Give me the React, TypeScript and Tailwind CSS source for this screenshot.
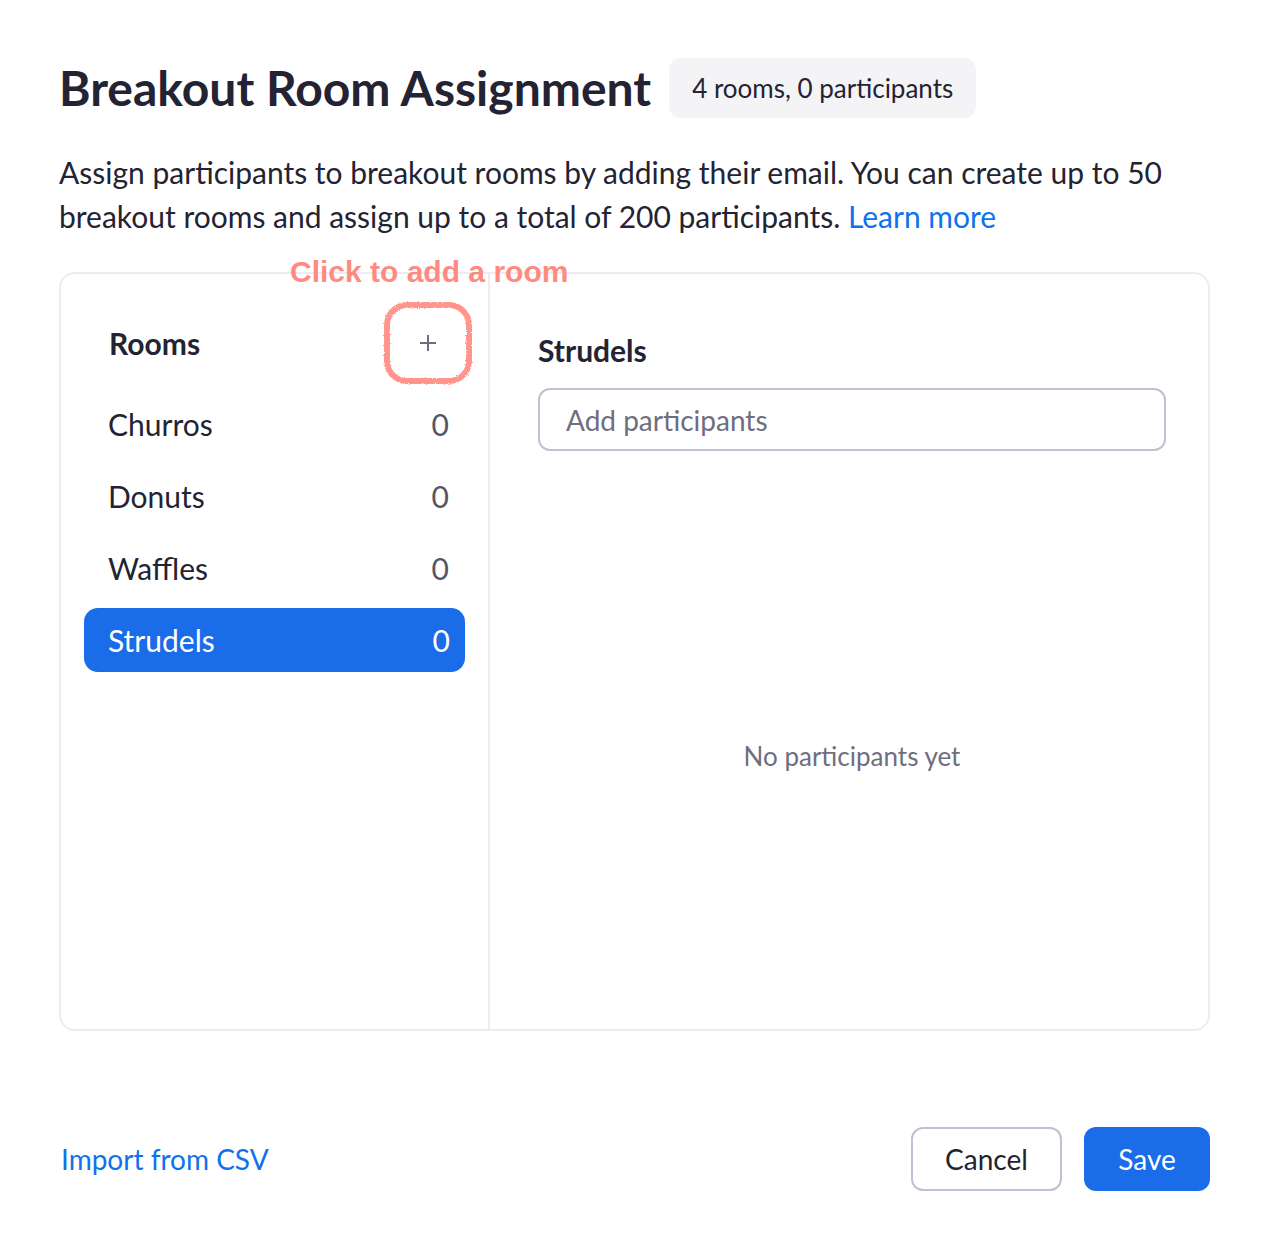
import React from "react";

const rooms = [
  { name: "Churros", count: 0 },
  { name: "Donuts", count: 0 },
  { name: "Waffles", count: 0 },
  { name: "Strudels", count: 0, active: true },
];

export default function App() {
  return (
    <div
      className="w-[1270px] h-[1236px] bg-white text-[#232333] px-[59px] pt-[56px]"
      style={{ fontFamily: "Lato, 'Noto Sans', sans-serif" }}
    >
      <div className="flex items-center h-[64px]">
        <h1 className="text-[48px] font-bold leading-none">Breakout Room Assignment</h1>
        <div className="ml-[18px] h-[60px] px-[23px] rounded-[12px] bg-[#f4f4f7] flex items-center text-[26px]">
          4 rooms, 0 participants
        </div>
      </div>

      <p className="mt-[30px] text-[30px] leading-[44px] w-[1140px]">
        Assign participants to breakout rooms by adding their email. You can create up to 50 breakout rooms and assign up to a total of 200 participants.{" "}
        <span className="text-[#0e72ed]">Learn more</span>
      </p>

      <div className="relative mt-[34px] h-[759px] w-[1151px] border-2 border-[#ececf1] rounded-[16px] flex">
        <div
          className="absolute left-[229px] top-[-17px] text-[30px] font-bold text-[#ff8a80] leading-none"
          style={{ fontFamily: "'Liberation Sans', Arial, sans-serif" }}
        >
          Click to add a room
        </div>
        <div className="w-[429px] border-r-2 border-[#ececf1] pt-[27px] px-[23px]">
          <div className="flex items-center justify-between h-[84px] pl-[25px] mr-[-8px]">
            <span className="text-[30px] font-bold">Rooms</span>
            <div className="relative w-[90px] h-[84px] flex items-center justify-center">
              <svg width="90" height="84" viewBox="0 0 90 84" className="absolute inset-0">
                <defs>
                  <filter id="chalk" x="-10%" y="-10%" width="120%" height="120%">
                    <feTurbulence type="fractalNoise" baseFrequency="0.9" numOctaves="2" seed="3" />
                    <feDisplacementMap in="SourceGraphic" scale="3" />
                  </filter>
                </defs>
                <rect
                  x="4"
                  y="4"
                  width="82"
                  height="76"
                  rx="20"
                  fill="none"
                  stroke="#ff8a80"
                  strokeWidth="6"
                  opacity="0.9"
                  filter="url(#chalk)"
                />
              </svg>
              <svg width="20" height="20" viewBox="0 0 20 20" className="relative text-[#6e6e80]">
                <path d="M10 2v16M2 10h16" stroke="currentColor" strokeWidth="2" />
              </svg>
            </div>
          </div>
          <div className="flex flex-col mt-[3px]">
            {rooms.map((r) =>
              r.active ? (
                <div
                  key={r.name}
                  className="mt-[4px] h-[64px] rounded-[14px] bg-[#1a6ce8] text-white flex items-center justify-between pl-[24px] pr-[15px] text-[30px]"
                >
                  <span>{r.name}</span>
                  <span>{r.count}</span>
                </div>
              ) : (
                <div
                  key={r.name}
                  className="h-[72px] flex items-center justify-between pl-[24px] pr-[16px] text-[30px]"
                >
                  <span>{r.name}</span>
                  <span className="text-[#555566]">{r.count}</span>
                </div>
              )
            )}
          </div>
        </div>
        <div className="flex-1 flex flex-col pl-[48px] pr-[42px] pt-[56px]">
          <div className="text-[30px] font-bold leading-[40px]">Strudels</div>
          <div className="mt-[18px] h-[63px] border-2 border-[#c1bfd0] rounded-[12px] flex items-center px-[26px] text-[28px] text-[#6e6e80]">
            Add participants
          </div>
          <div className="flex-1 flex items-center justify-center pt-[32px] text-[26px] text-[#6e6e80]">
            No participants yet
          </div>
        </div>
      </div>

      <div className="mt-[96px] flex items-center justify-between w-[1151px]">
        <span className="ml-[2px] text-[28px] text-[#0e72ed]">Import from CSV</span>
        <div className="flex gap-[22px]">
          <div className="w-[151px] h-[64px] border-2 border-[#c1bfd0] rounded-[12px] flex items-center justify-center text-[28px]">
            Cancel
          </div>
          <div className="w-[126px] h-[64px] rounded-[12px] bg-[#1a6ce8] text-white flex items-center justify-center text-[28px]">
            Save
          </div>
        </div>
      </div>
    </div>
  );
}
